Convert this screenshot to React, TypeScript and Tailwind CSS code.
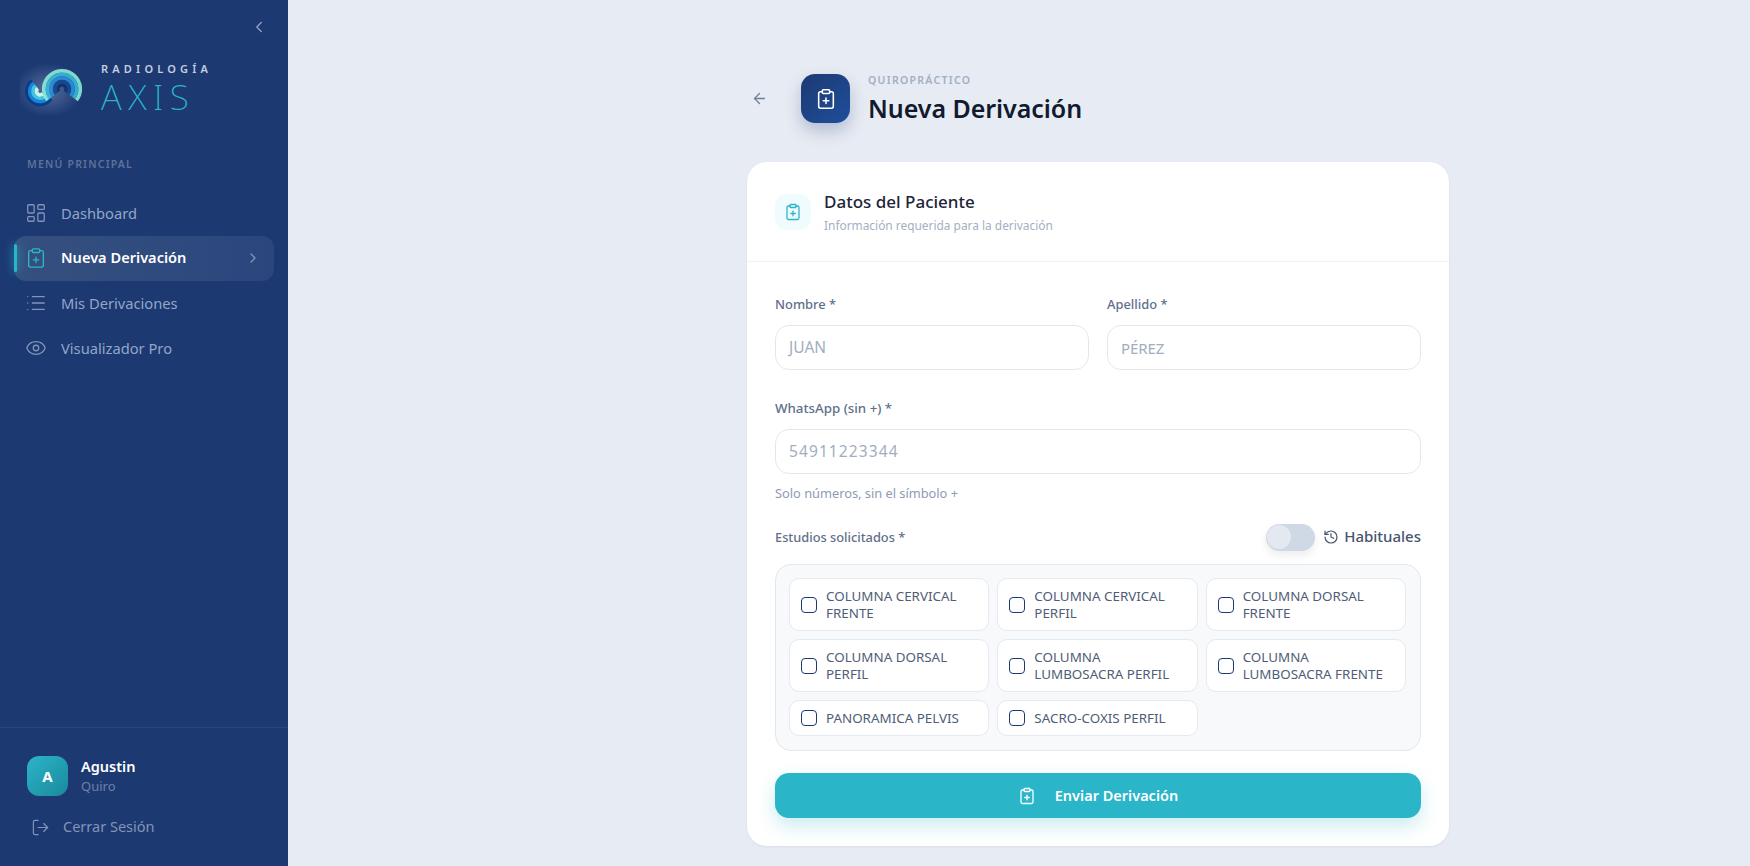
import { ChevronLeft, ChevronRight, ArrowLeft, LayoutDashboard, ClipboardPlus, List, Eye, LogOut, History } from "lucide-react";

const estudios = [
  "COLUMNA CERVICAL FRENTE",
  "COLUMNA CERVICAL PERFIL",
  "COLUMNA DORSAL FRENTE",
  "COLUMNA DORSAL PERFIL",
  "COLUMNA LUMBOSACRA PERFIL",
  "COLUMNA LUMBOSACRA FRENTE",
  "PANORAMICA PELVIS",
  "SACRO-COXIS PERFIL",
];

// arc between two angles in degrees, clockwise on screen
const arc = (cx: number, cy: number, r: number, a0: number, a1: number) => {
  const p = (a: number) => `${cx + r * Math.cos((a * Math.PI) / 180)} ${cy + r * Math.sin((a * Math.PI) / 180)}`;
  return `M${p(a0)} A${r} ${r} 0 ${a1 - a0 > 180 ? 1 : 0} 1 ${p(a1)}`;
};

const leftBands = [
  { r: 13.5, w: 3.2, c: "#0c3d88" },
  { r: 10.4, w: 3.2, c: "#1685d8" },
  { r: 7.2, w: 3.2, c: "#3fc4e6" },
  { r: 3.6, w: 4, c: "#c0f5e6" },
];

const rightBands = [
  { r: 18.2, w: 3.8, c: "#8deedc" },
  { r: 14.6, w: 3.6, c: "#35bfd8" },
  { r: 11, w: 3.6, c: "#2b8fe0" },
  { r: 7.4, w: 3.6, c: "#10498f" },
  { r: 4, w: 3.2, c: "#0b2f6e" },
];

const Logo = () => (
  <svg width="70" height="52" viewBox="0 0 70 52" className="shrink-0">
    <defs>
      <radialGradient id="glow">
        <stop offset="0%" stopColor="#8fa3c8" stopOpacity="0.5" />
        <stop offset="100%" stopColor="#8fa3c8" stopOpacity="0" />
      </radialGradient>
    </defs>
    <ellipse cx="28" cy="27" rx="34" ry="27" fill="url(#glow)" />
    {leftBands.map((b) => (
      <path key={b.r} d={arc(20, 28.3, b.r, 34, 233)} fill="none" stroke={b.c} strokeWidth={b.w} />
    ))}
    <g opacity="0.88">
      {rightBands.map((b) => (
        <path key={b.r} d={arc(42, 26, b.r, 142, 398)} fill="none" stroke={b.c} strokeWidth={b.w} />
      ))}
    </g>
  </svg>
);

const NavItem = ({ icon: Icon, label }: { icon: typeof List; label: string }) => (
  <div className="flex h-[45px] items-center gap-[14px] px-[11px] text-[14.7px] text-[#94a6c8]">
    <Icon size={22} strokeWidth={1.4} className="shrink-0 text-[#8394b8]" />
    <span>{label}</span>
  </div>
);

export default function App() {
  return (
    <div className="flex h-screen overflow-hidden bg-[#e7ebf3] font-['Noto_Sans',sans-serif]">
      <aside className="flex w-[288px] shrink-0 flex-col bg-[#1c3972]">
        <div className="flex justify-end px-[20px] pt-[18px]">
          <ChevronLeft size={18} strokeWidth={1.8} className="text-[#8fa0c2]" />
        </div>
        <div className="mt-[26px] flex items-center gap-[11px] pl-[20px]">
          <Logo />
          <div className="flex flex-col">
            <span className="text-[11px] font-semibold leading-[14px] tracking-[4.2px] text-[#c3cde0]">RADIOLOGÍA</span>
            <span className="mt-[2px] text-[35px] font-extralight leading-[38px] tracking-[6.5px] text-[#2bb5c9]">AXIS</span>
          </div>
        </div>
        <div className="mt-[41px] pl-[27px] text-[10.5px] font-semibold tracking-[1.2px] text-[#5f7199]">MENÚ PRINCIPAL</div>
        <nav className="mt-[18px] flex flex-col px-[14px]">
          <NavItem icon={LayoutDashboard} label="Dashboard" />
          <div className="relative flex h-[45px] items-center gap-[14px] rounded-xl bg-gradient-to-r from-[#35507f] to-[#2a467d] px-[11px] text-[14.6px] font-semibold text-white">
            <span className="absolute left-0 top-[8px] h-[28px] w-[3px] rounded-full bg-[#2bb5c9] shadow-[0_0_10px_#2bb5c9]" />
            <ClipboardPlus size={22} strokeWidth={1.5} className="shrink-0 text-[#2bb5c9]" />
            <span className="flex-1">Nueva Derivación</span>
            <ChevronRight size={16} className="mr-[2px] text-[#8394b8]" />
          </div>
          <NavItem icon={List} label="Mis Derivaciones" />
          <NavItem icon={Eye} label="Visualizador Pro" />
        </nav>
        <div className="mt-auto border-t border-[#2a4680] px-[27px] pb-[23px] pt-[28px]">
          <div className="flex items-center gap-[13px]">
            <div className="flex h-[40px] w-[41px] items-center justify-center rounded-xl bg-gradient-to-br from-[#2bb5c9] to-[#1a8a9c] text-[15px] font-bold text-white">A</div>
            <div className="flex flex-col">
              <span className="text-[14.5px] font-semibold leading-[20px] text-white">Agustin</span>
              <span className="text-[13px] leading-[20px] text-[#6f82a8]">Quiro</span>
            </div>
          </div>
          <div className="mt-[15px] flex h-[32px] items-center gap-[13px] pl-[4px] text-[14.5px] text-[#8394b8]">
            <LogOut size={19} strokeWidth={1.5} />
            <span>Cerrar Sesión</span>
          </div>
        </div>
      </aside>

      <main className="flex flex-1 justify-center pl-[160px] pt-[74px]">
        <div className="mr-[2px] w-[702px]">
          <div className="flex h-[49px] items-center">
            <ArrowLeft size={17} strokeWidth={1.8} className="ml-[4px] text-[#6f7f9c]" />
            <div className="ml-[33px] flex h-[49px] w-[49px] items-center justify-center rounded-[14px] bg-gradient-to-br from-[#1c3a72] to-[#1f4e9c] shadow-[0_8px_16px_rgba(28,57,114,0.25)]">
              <ClipboardPlus size={22} strokeWidth={1.7} className="text-white" />
            </div>
            <div className="ml-[18px] flex flex-col">
              <span className="text-[10.5px] font-semibold leading-[14px] tracking-[1.3px] text-[#a3afc4]">QUIROPRÁCTICO</span>
              <span className="mt-[4px] text-[25px] font-semibold leading-[34px] tracking-[-0.05px] text-[#111a2e]">Nueva Derivación</span>
            </div>
          </div>

          <div className="mt-[39px] h-[684px] rounded-[20px] bg-white shadow-[0_1px_3px_rgba(0,0,0,0.06)]">
            <div className="flex h-[100px] items-center gap-[13px] border-b border-[#f0f2f7] px-[28px]">
              <div className="flex h-[36px] w-[36px] items-center justify-center rounded-xl bg-[#f0fbfd]">
                <ClipboardPlus size={18} strokeWidth={1.7} className="text-[#2bb5c9]" />
              </div>
              <div className="flex flex-col pt-[1px]">
                <span className="text-[17px] font-medium leading-[24px] text-[#1c2438]">Datos del Paciente</span>
                <span className="mt-[2px] text-[11.9px] leading-[18px] text-[#a3afc4]">Información requerida para la derivación</span>
              </div>
            </div>

            <div className="px-[28px] pt-[32px]">
              <div className="grid grid-cols-2 gap-[18px]">
                <div>
                  <div className="text-[12.9px] font-medium leading-[20px] text-[#5f6f8a]">Nombre *</div>
                  <div className="mt-[11px] flex h-[45px] items-center rounded-[14px] border border-[#e2e8f0] px-[13px] pt-[1px] text-[15.5px] text-[#a0aec0]">JUAN</div>
                </div>
                <div>
                  <div className="text-[12.9px] font-medium leading-[20px] text-[#5f6f8a]">Apellido *</div>
                  <div className="mt-[11px] flex h-[45px] items-center rounded-[14px] border border-[#e2e8f0] px-[13px] pt-[1px] text-[15px] tracking-[-0.1px] text-[#a0aec0]">PÉREZ</div>
                </div>
              </div>

              <div className="mt-[28px] text-[13.3px] font-medium leading-[20px] text-[#5f6f8a]">WhatsApp (sin +) *</div>
              <div className="mt-[11px] flex h-[45px] items-center rounded-[14px] border border-[#e2e8f0] px-[13px] pt-[1px] text-[15.5px] tracking-[1.1px] text-[#a0aec0]">54911223344</div>
              <div className="mt-[10px] text-[12.8px] leading-[18px] text-[#8e9bb3]">Solo números, sin el símbolo +</div>

              <div className="mt-[21px] flex h-[28px] items-center">
                <span className="mt-[2px] flex-1 text-[12.8px] font-medium text-[#5f6f8a]">Estudios solicitados *</span>
                <div className="flex h-[27px] w-[49px] items-center rounded-full bg-[#cfd8e5] p-[1px] shadow-[0_4px_8px_rgba(0,0,0,0.08)]">
                  <div className="h-[24px] w-[24px] rounded-full bg-[#e4e8f1]" />
                </div>
                <History size={16} strokeWidth={1.8} className="ml-[8px] text-[#475570]" />
                <span className="-mt-[2px] ml-[5px] text-[15px] font-medium text-[#475570]">Habituales</span>
              </div>

              <div className="mt-[13px] grid grid-cols-3 gap-x-[8px] gap-y-[8px] rounded-[16px] border border-[#e2e8f0] bg-[#f7f9fb] pb-[14px] pl-[13px] pr-[14px] pt-[13px]">
                {estudios.map((e) => (
                  <div key={e} className="flex items-center gap-[9px] rounded-[10px] border border-[#e5e9f1] bg-white px-[11px] py-[8.5px]">
                    <span className="h-[16px] w-[16px] shrink-0 rounded-[4px] border border-[#1c3972]" />
                    <span className="text-[13.4px] leading-[17px] text-[#4f5d76]">{e}</span>
                  </div>
                ))}
              </div>

              <div className="mt-[22px] flex h-[45px] items-center justify-center gap-[19px] rounded-[14px] bg-[#2bb5c9] text-[14.5px] font-semibold text-white shadow-[0_8px_18px_rgba(43,181,201,0.25)]">
                <ClipboardPlus size={18} strokeWidth={1.7} />
                <span>Enviar Derivación</span>
              </div>
            </div>
          </div>
        </div>
      </main>
    </div>
  );
}
